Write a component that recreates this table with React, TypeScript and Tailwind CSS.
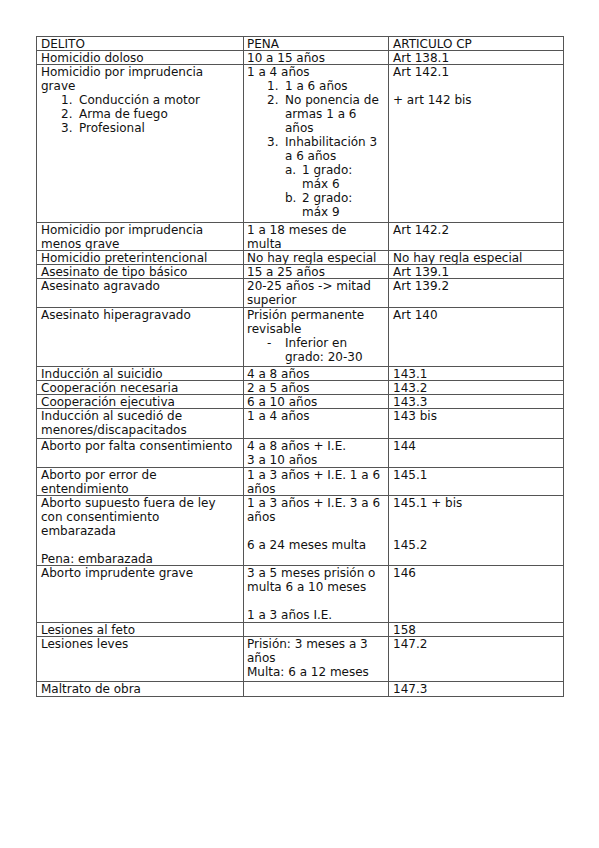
import React from "react";

type Node = React.ReactNode;

const L = ({ children }: { children?: Node }) => (
  <div className="whitespace-nowrap h-[14px]">{children}</div>
);
const B = () => <div className="h-[14px]" />;

const Item = ({ m, children }: { m: string; children: Node }) => (
  <div className="flex">
    <div className="ml-[20px] w-[18px] shrink-0 whitespace-nowrap h-[14px]">{m}</div>
    <div>{children}</div>
  </div>
);

const SubItem = ({ m, children }: { m: string; children: Node }) => (
  <div className="flex">
    <div className="w-[17px] shrink-0 whitespace-nowrap h-[14px]">{m}</div>
    <div>{children}</div>
  </div>
);

const Row = ({
  h,
  first,
  a,
  b,
  c,
}: {
  h: string;
  first?: boolean;
  a: Node;
  b: Node;
  c: Node;
}) => (
  <div className={`flex border-y border-[#555] ${first ? "" : "-mt-px"} ${h}`}>
    <div className="w-[207px] shrink-0 border-l border-[#555] pl-[4px]">{a}</div>
    <div className="w-[145px] shrink-0 border-l border-[#555] pl-[3px]">{b}</div>
    <div className="w-[176px] shrink-0 border-x border-[#555] pl-[4px]">{c}</div>
  </div>
);

export default function App() {
  return (
    <div
      className="w-[599px] h-[848px] bg-white text-[#111] text-[12px] leading-[14px] pt-[36px] pl-[36px]"
      style={{ fontFamily: '"DejaVu Sans", Verdana, sans-serif' }}
    >
      <div className="w-[528px] flex flex-col">
        <Row first h="h-[15px]" a={<L>DELITO</L>} b={<L>PENA</L>} c={<L>ARTICULO CP</L>} />
        <Row h="h-[15px]" a={<L>Homicidio doloso</L>} b={<L>10 a 15 años</L>} c={<L>Art 138.1</L>} />
        <Row
          h="h-[159px]"
          a={
            <>
              <L>Homicidio por imprudencia</L>
              <L>grave</L>
              <Item m="1.">
                <L>Conducción a motor</L>
              </Item>
              <Item m="2.">
                <L>Arma de fuego</L>
              </Item>
              <Item m="3.">
                <L>Profesional</L>
              </Item>
            </>
          }
          b={
            <>
              <L>1 a 4 años</L>
              <Item m="1.">
                <L>1 a 6 años</L>
              </Item>
              <Item m="2.">
                <L>No ponencia de</L>
                <L>armas 1 a 6</L>
                <L>años</L>
              </Item>
              <Item m="3.">
                <L>Inhabilitación 3</L>
                <L>a 6 años</L>
                <SubItem m="a.">
                  <L>1 grado:</L>
                  <L>máx 6</L>
                </SubItem>
                <SubItem m="b.">
                  <L>2 grado:</L>
                  <L>máx 9</L>
                </SubItem>
              </Item>
            </>
          }
          c={
            <>
              <L>Art 142.1</L>
              <B />
              <L>+ art 142 bis</L>
            </>
          }
        />
        <Row
          h="h-[29px]"
          a={
            <>
              <L>Homicidio por imprudencia</L>
              <L>menos grave</L>
            </>
          }
          b={
            <>
              <L>1 a 18 meses de</L>
              <L>multa</L>
            </>
          }
          c={<L>Art 142.2</L>}
        />
        <Row
          h="h-[15px]"
          a={<L>Homicidio preterintencional</L>}
          b={<L>No hay regla especial</L>}
          c={<L>No hay regla especial</L>}
        />
        <Row h="h-[15px]" a={<L>Asesinato de tipo básico</L>} b={<L>15 a 25 años</L>} c={<L>Art 139.1</L>} />
        <Row
          h="h-[30px]"
          a={<L>Asesinato agravado</L>}
          b={
            <>
              <L>20-25 años -&gt; mitad</L>
              <L>superior</L>
            </>
          }
          c={<L>Art 139.2</L>}
        />
        <Row
          h="h-[60px]"
          a={<L>Asesinato hiperagravado</L>}
          b={
            <>
              <L>Prisión permanente</L>
              <L>revisable</L>
              <Item m="-">
                <L>Inferior en</L>
                <L>grado: 20-30</L>
              </Item>
            </>
          }
          c={<L>Art 140</L>}
        />
        <Row h="h-[15px]" a={<L>Inducción al suicidio</L>} b={<L>4 a 8 años</L>} c={<L>143.1</L>} />
        <Row h="h-[15px]" a={<L>Cooperación necesaria</L>} b={<L>2 a 5 años</L>} c={<L>143.2</L>} />
        <Row h="h-[15px]" a={<L>Cooperación ejecutiva</L>} b={<L>6 a 10 años</L>} c={<L>143.3</L>} />
        <Row
          h="h-[31px]"
          a={
            <>
              <L>Inducción al sucedió de</L>
              <L>menores/discapacitados</L>
            </>
          }
          b={<L>1 a 4 años</L>}
          c={<L>143 bis</L>}
        />
        <Row
          h="h-[30px]"
          a={<L>Aborto por falta consentimiento</L>}
          b={
            <>
              <L>4 a 8 años + I.E.</L>
              <L>3 a 10 años</L>
            </>
          }
          c={<L>144</L>}
        />
        <Row
          h="h-[29px]"
          a={
            <>
              <L>Aborto por error de</L>
              <L>entendimiento</L>
            </>
          }
          b={
            <>
              <L>1 a 3 años + I.E. 1 a 6</L>
              <L>años</L>
            </>
          }
          c={<L>145.1</L>}
        />
        <Row
          h="h-[71px]"
          a={
            <>
              <L>Aborto supuesto fuera de ley</L>
              <L>con consentimiento</L>
              <L>embarazada</L>
              <B />
              <L>Pena: embarazada</L>
            </>
          }
          b={
            <>
              <L>1 a 3 años + I.E. 3 a 6</L>
              <L>años</L>
              <B />
              <L>6 a 24 meses multa</L>
            </>
          }
          c={
            <>
              <L>145.1 + bis</L>
              <B />
              <B />
              <L>145.2</L>
            </>
          }
        />
        <Row
          h="h-[58px]"
          a={<L>Aborto imprudente grave</L>}
          b={
            <>
              <L>3 a 5 meses prisión o</L>
              <L>multa 6 a 10 meses</L>
              <B />
              <L>1 a 3 años I.E.</L>
            </>
          }
          c={<L>146</L>}
        />
        <Row h="h-[15px]" a={<L>Lesiones al feto</L>} b={<L />} c={<L>158</L>} />
        <Row
          h="h-[46px]"
          a={<L>Lesiones leves</L>}
          b={
            <>
              <L>Prisión: 3 meses a 3</L>
              <L>años</L>
              <L>Multa: 6 a 12 meses</L>
            </>
          }
          c={<L>147.2</L>}
        />
        <Row h="h-[16px]" a={<L>Maltrato de obra</L>} b={<L />} c={<L>147.3</L>} />
      </div>
    </div>
  );
}
